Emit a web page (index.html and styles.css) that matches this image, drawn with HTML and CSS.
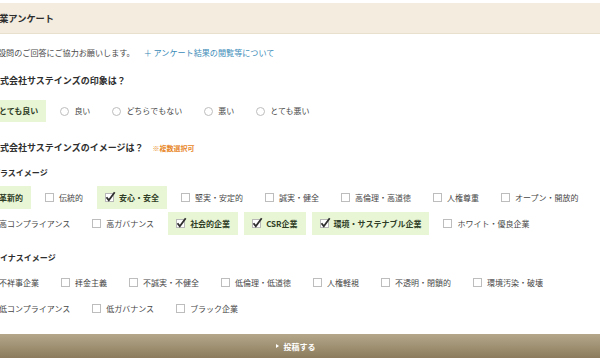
FILE: index.html
```html
<!DOCTYPE html>
<html lang="ja">
<head>
<meta charset="utf-8">
<title>企業アンケート</title>
<link rel="stylesheet" href="styles.css">
</head>
<body>
<div class="page">
  <div class="band"><h1 class="title">企業アンケート</h1></div>
  <p class="intro">設問のご回答にご協力お願いします。<a class="link" href="#">＋ アンケート結果の閲覧等について</a></p>

  <h2 class="q q1">株式会社サステインズの印象は？</h2>
  <div class="opts radios">
    <label class="opt on"><span class="radio"></span><span>とても良い</span></label>
    <label class="opt"><span class="radio"></span><span>良い</span></label>
    <label class="opt"><span class="radio"></span><span>どちらでもない</span></label>
    <label class="opt"><span class="radio"></span><span>悪い</span></label>
    <label class="opt"><span class="radio"></span><span>とても悪い</span></label>
  </div>

  <h2 class="q q2">株式会社サステインズのイメージは？<span class="note">※複数選択可</span></h2>
  <h3 class="sub">プラスイメージ</h3>
  <div class="opts checks">
    <label class="opt on"><span class="cb"></span><span>革新的</span></label>
    <label class="opt"><span class="cb"></span><span>伝統的</span></label>
    <label class="opt on"><svg class="cbx" width="9" height="9" viewBox="0 0 9 9" overflow="visible"><rect x="0.5" y="0.5" width="8" height="8" fill="#fff" stroke="#b8b8b8"/><path d="M1.5 4.2 L3.8 7.3 L9.7 -0.7" fill="none" stroke="#2f2f2f" stroke-width="1.8"/></svg><span>安心・安全</span></label>
    <label class="opt"><span class="cb"></span><span>堅実・安定的</span></label>
    <label class="opt"><span class="cb"></span><span>誠実・健全</span></label>
    <label class="opt"><span class="cb"></span><span>高倫理・高道徳</span></label>
    <label class="opt"><span class="cb"></span><span>人権尊重</span></label>
    <label class="opt"><span class="cb"></span><span>オープン・開放的</span></label>
    <label class="opt"><span class="cb"></span><span>高コンプライアンス</span></label>
    <label class="opt"><span class="cb"></span><span>高ガバナンス</span></label>
    <label class="opt on"><svg class="cbx" width="9" height="9" viewBox="0 0 9 9" overflow="visible"><rect x="0.5" y="0.5" width="8" height="8" fill="#fff" stroke="#b8b8b8"/><path d="M1.5 4.2 L3.8 7.3 L9.7 -0.7" fill="none" stroke="#2f2f2f" stroke-width="1.8"/></svg><span>社会的企業</span></label>
    <label class="opt on"><svg class="cbx" width="9" height="9" viewBox="0 0 9 9" overflow="visible"><rect x="0.5" y="0.5" width="8" height="8" fill="#fff" stroke="#b8b8b8"/><path d="M1.5 4.2 L3.8 7.3 L9.7 -0.7" fill="none" stroke="#2f2f2f" stroke-width="1.8"/></svg><span>CSR企業</span></label>
    <label class="opt on"><svg class="cbx" width="9" height="9" viewBox="0 0 9 9" overflow="visible"><rect x="0.5" y="0.5" width="8" height="8" fill="#fff" stroke="#b8b8b8"/><path d="M1.5 4.2 L3.8 7.3 L9.7 -0.7" fill="none" stroke="#2f2f2f" stroke-width="1.8"/></svg><span>環境・サステナブル企業</span></label>
    <label class="opt"><span class="cb"></span><span>ホワイト・優良企業</span></label>
  </div>

  <h3 class="sub sub2">マイナスイメージ</h3>
  <div class="opts checks">
    <label class="opt"><span class="cb"></span><span>不祥事企業</span></label>
    <label class="opt"><span class="cb"></span><span>拝金主義</span></label>
    <label class="opt"><span class="cb"></span><span>不誠実・不健全</span></label>
    <label class="opt"><span class="cb"></span><span>低倫理・低道徳</span></label>
    <label class="opt"><span class="cb"></span><span>人権軽視</span></label>
    <label class="opt"><span class="cb"></span><span>不透明・閉鎖的</span></label>
    <label class="opt"><span class="cb"></span><span>環境汚染・破壊</span></label>
    <label class="opt"><span class="cb"></span><span>低コンプライアンス</span></label>
    <label class="opt"><span class="cb"></span><span>低ガバナンス</span></label>
    <label class="opt"><span class="cb"></span><span>ブラック企業</span></label>
  </div>

  <div class="submit"><span class="arrow"></span>投稿する</div>
</div>
</body>
</html>
```

FILE: styles.css
```css
html, body {
  margin: 0;
  padding: 0;
  background: #fff;
}
body {
  font-family: "Noto Sans CJK JP", "Noto Sans", sans-serif;
  color: #555;
  overflow: hidden;
}
.page {
  margin: 0 -23px;
  padding-top: 3px;
}
.band {
  background: #f3ecdf;
  height: 30px;
  border-bottom: 1px solid #e8dfcd;
  display: flex;
  align-items: center;
  padding-left: 13px;
}
.title {
  margin: 0;
  font-size: 9.2px;
  line-height: 14px;
  font-weight: bold;
  color: #2e2e2e;
}
.intro {
  margin: 12px 0 0;
  padding-left: 21px;
  font-size: 8.1px;
  line-height: 14px;
  color: #4a4a4a;
}
.link {
  color: #3a8bb8;
  text-decoration: none;
  margin-left: 9px;
}
.q {
  margin: 14px 0 0;
  padding-left: 14px;
  font-size: 9px;
  line-height: 14px;
  font-weight: bold;
  color: #2e2e2e;
}
.q2 {
  margin-top: 19px;
}
.note {
  margin-left: 9px;
  font-size: 7px;
  color: #e8872a;
}
.sub {
  margin: 11px 0 0;
  padding-left: 15px;
  font-size: 8px;
  line-height: 14px;
  font-weight: bold;
  color: #2e2e2e;
}
.sub2 {
  margin-top: 16px;
}
.opts {
  display: flex;
  flex-wrap: wrap;
  gap: 3px 6px;
}
.radios {
  margin-top: 12px;
}
.checks {
  margin-top: 6px;
}
.opt {
  display: flex;
  align-items: center;
  height: 22px;
  padding: 0 8px;
  font-size: 8px;
  line-height: 12px;
  color: #474747;
  white-space: nowrap;
}
.checks .opt {
  height: 23px;
}
.opt.on {
  background: #e9f6d6;
  color: #2f3d26;
  font-weight: bold;
}
.radio {
  flex: none;
  width: 7px;
  height: 7px;
  border: 1px solid #bdbdbd;
  border-radius: 50%;
  background: #fff;
  margin-right: 5px;
}
.cb {
  flex: none;
  width: 7px;
  height: 7px;
  border: 1px solid #bdbdbd;
  background: #fff;
  margin-right: 5px;
}
.cbx {
  flex: none;
  margin-right: 5px;
}
.submit {
  margin-top: 14px;
  height: 24px;
  background: linear-gradient(#b4a78a, #8c7c5d);
  color: #fff;
  font-size: 8px;
  font-weight: bold;
  display: flex;
  align-items: center;
  justify-content: center;
  padding-right: 9px;
}
.arrow {
  width: 0;
  height: 0;
  border-left: 3px solid #fff;
  border-top: 2.5px solid transparent;
  border-bottom: 2.5px solid transparent;
  margin-right: 5px;
}
```
